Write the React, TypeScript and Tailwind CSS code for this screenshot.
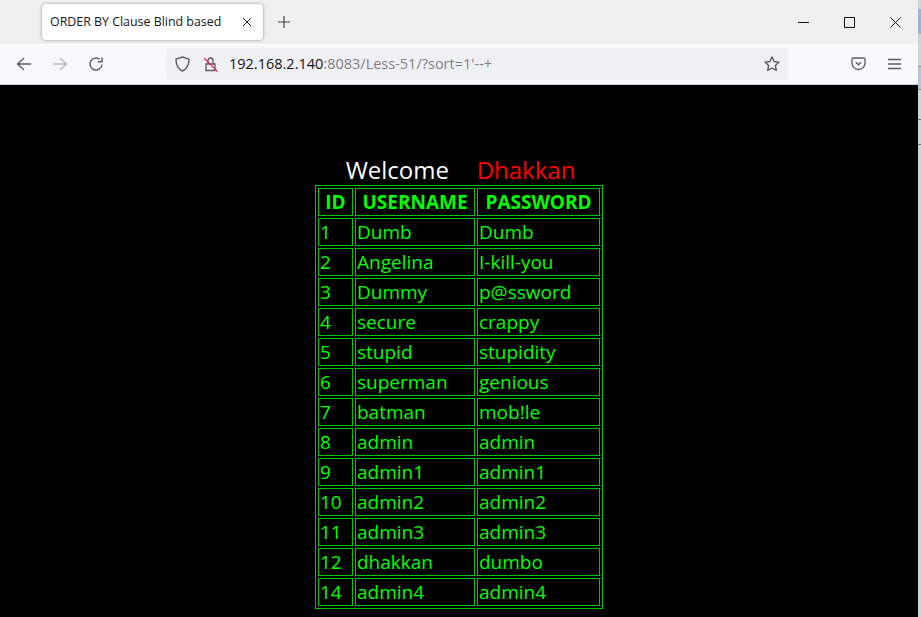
const rows = [
  ["1", "Dumb", "Dumb"],
  ["2", "Angelina", "I-kill-you"],
  ["3", "Dummy", "p@ssword"],
  ["4", "secure", "crappy"],
  ["5", "stupid", "stupidity"],
  ["6", "superman", "genious"],
  ["7", "batman", "mob!le"],
  ["8", "admin", "admin"],
  ["9", "admin1", "admin1"],
  ["10", "admin2", "admin2"],
  ["11", "admin3", "admin3"],
  ["12", "dhakkan", "dumbo"],
  ["14", "admin4", "admin4"],
];

function BrowserBar() {
  return (
    <div className="shrink-0 font-['Open_Sans',sans-serif]">
      <div className="h-11 bg-[#f0f0f0] flex items-center pl-[42px]">
        <div className="w-[221px] h-9 bg-white rounded-[4px] shadow-[0_0_3px_rgba(0,0,0,0.45)] flex items-center pl-[8px] pr-[11px] text-[12.4px] text-[#15141a]">
          <span className="flex-1 whitespace-nowrap">ORDER BY Clause Blind based</span>
          <svg width="10" height="10" viewBox="0 0 10 10" stroke="#222" fill="none">
            <path d="M1 1l8 8M9 1l-8 8" />
          </svg>
        </div>
        <svg className="ml-[15px]" width="12" height="12" viewBox="0 0 12 12" stroke="#444" fill="none" strokeWidth="1.2">
          <path d="M6 0v12M0 6h12" />
        </svg>
        <div className="ml-auto flex items-center pr-[17px] gap-[35px]">
          <svg width="11" height="11" viewBox="0 0 11 11" stroke="#111" fill="none">
            <path d="M0 5.5h11" />
          </svg>
          <svg width="11" height="11" viewBox="0 0 11 11" stroke="#111" fill="none">
            <path d="M.5.5h10v10H.5z" />
          </svg>
          <svg width="11" height="11" viewBox="0 0 11 11" stroke="#111" fill="none">
            <path d="M.5.5l10 10M10.5.5l-10 10" />
          </svg>
        </div>
      </div>
      <div className="h-[41px] bg-[#f9f9fb] flex items-center border-b border-[#cfcfd8]">
        <svg className="ml-[16px]" width="16" height="16" viewBox="0 0 16 16" stroke="#5b5b66" fill="none" strokeWidth="1.3">
          <path d="M15 8H2M8 2L1.5 8 8 14" />
        </svg>
        <svg className="ml-[20px]" width="16" height="16" viewBox="0 0 16 16" stroke="#b8b8be" fill="none" strokeWidth="1.3">
          <path d="M1 8h13M8 2l6.500 6L8 14" />
        </svg>
        <svg className="ml-[20px]" width="16" height="16" viewBox="0 0 16 16" stroke="#5b5b66" fill="none" strokeWidth="1.4">
          <path d="M14 8.500A6 6 0 1 1 11.800 3.300" />
          <path d="M14 1.500v4.200H9.800" />
        </svg>
        <div className="ml-[62px] w-[622px] h-8 bg-[#f0f0f4] rounded-[4px] flex items-center pl-[9px] pr-[8px] text-[14.5px]">
          <svg width="15" height="16" viewBox="0 0 15 16" stroke="#5b5b66" fill="none" strokeWidth="1.4">
            <path d="M7.500 1L1 3.200c0 5.500 1.800 9.500 6.500 11.800C12.200 12.700 14 8.700 14 3.200z" />
          </svg>
          <svg className="ml-[13px]" width="16" height="16" viewBox="0 0 16 16" fill="none" strokeWidth="1.3">
            <path d="M3 8h9v6.500H3zM5 8V4.500a2.500 2.500 0 0 1 5 0V8" stroke="#5b5b66" />
            <path d="M1 2l13.500 13.500" stroke="#e22850" />
          </svg>
          <span className="ml-[10px] whitespace-nowrap text-[#15141a]">
            192.168.2.140<span className="text-[#7f7f86]">:8083/Less-51/?sort=1'--+</span>
          </span>
          <svg className="ml-auto" width="16" height="16" viewBox="0 0 16 16" stroke="#5b5b66" fill="none" strokeWidth="1.4" strokeLinejoin="round">
            <path d="M8 1l2.100 4.500 4.900.6-3.600 3.400.9 4.900L8 12l-4.300 2.400.9-4.900L1 6.100l4.900-.6z" />
          </svg>
        </div>
        <svg className="ml-[63px]" width="15" height="14" viewBox="0 0 15 14" stroke="#5b5b66" fill="none" strokeWidth="1.3">
          <path d="M1 2.500A1.500 1.500 0 0 1 2.500 1h10A1.500 1.500 0 0 1 14 2.500V6a6.500 6.500 0 0 1-13 0z" />
          <path d="M4.800 5.200L7.500 7.800l2.700-2.600" />
        </svg>
        <svg className="ml-[22px]" width="13" height="12" viewBox="0 0 13 12" stroke="#5b5b66" fill="none" strokeWidth="1.3">
          <path d="M0 1.500h13M0 6h13M0 10.500h13" />
        </svg>
      </div>
    </div>
  );
}

// the sliver of the window behind, cut off at the right edge of the shot
function WindowSliver() {
  return (
    <div className="w-[3px] shrink-0 flex flex-col bg-[#d4d4d4]">
      <div className="h-[9px]" />
      <div className="h-[25px] bg-[#a3b1d0]" />
      <div className="h-[32px]" />
      <div className="h-[24px] bg-[#bcc4d4] border-y border-[#8a8a8a]" />
      <div className="h-[29px]" />
      <div className="h-px bg-[#777]" />
      <div className="h-6" />
      <div className="h-px bg-[#777]" />
    </div>
  );
}

export default function App() {
  return (
    <div className="h-screen flex overflow-hidden bg-white">
      <div className="flex-1 min-w-0 flex flex-col">
        <BrowserBar />
        <div className="flex-1 flex flex-col items-center bg-black pt-[69px] font-['Open_Sans',sans-serif] text-[19px]">
          <div className="h-[31px] flex items-center pl-[3px] text-[24px] leading-[31px] whitespace-nowrap">
            <span className="text-white w-[131px]">Welcome</span>
            <span className="text-[#ff0000]">Dhakkan</span>
          </div>
          <table className="border-separate border-spacing-[2px] border border-[#00c800] text-[#00ff00] table-fixed w-[288px] shrink-0 leading-[26px]">
            <thead>
              <tr>
                <th className="w-[35px] h-[28px] p-0 border border-[#00c800] font-bold">ID</th>
                <th className="w-[120px] h-[28px] p-0 border border-[#00c800] font-bold">USERNAME</th>
                <th className="w-[123px] h-[28px] p-0 border border-[#00c800] font-bold">PASSWORD</th>
              </tr>
            </thead>
            <tbody>
              {rows.map((r) => (
                <tr key={r[0]}>
                  {r.map((c, i) => (
                    <td key={i} className="h-[28px] py-0 pl-[1px] pr-0 border border-[#00c800] whitespace-nowrap">
                      {c}
                    </td>
                  ))}
                </tr>
              ))}
            </tbody>
          </table>
        </div>
      </div>
      <WindowSliver />
    </div>
  );
}
